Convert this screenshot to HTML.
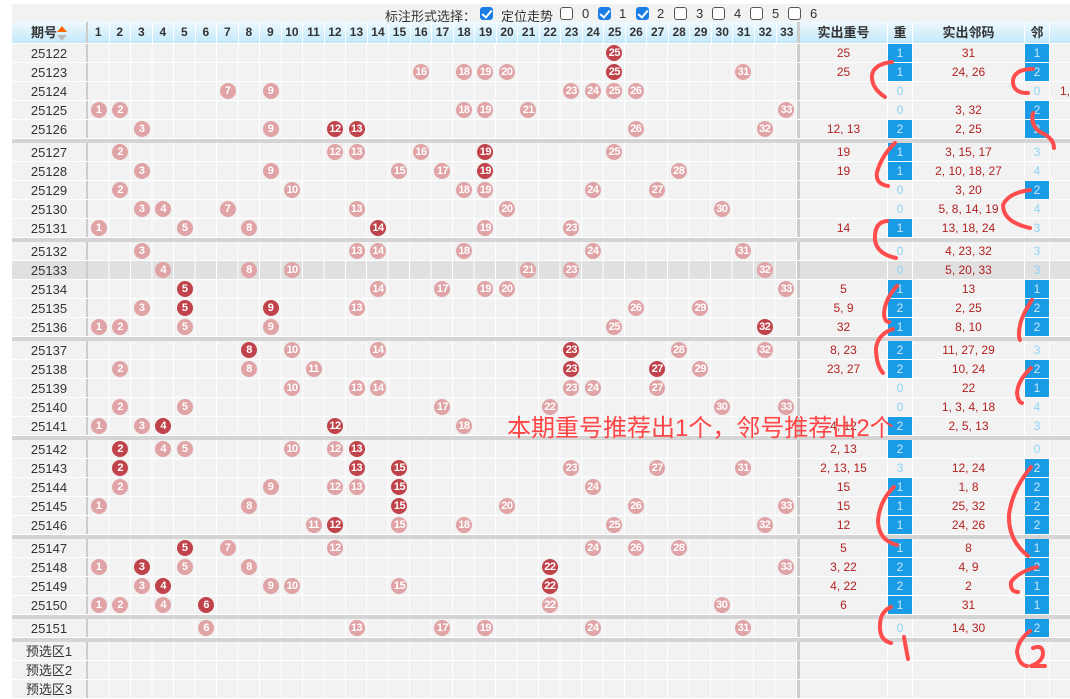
<!DOCTYPE html>
<html><head><meta charset="utf-8">
<style>
*{margin:0;padding:0;box-sizing:border-box}
body{width:1070px;height:697px;overflow:hidden;background:#fff;font-family:"Liberation Sans","Noto Sans CJK SC",sans-serif;font-size:12px;color:#333;position:relative}
.top{position:absolute;left:12px;top:4px;width:1058px;height:18px;background:#f2f2f2;font-size:13px;color:#333}
.top span{position:absolute;top:2px}
.cb{position:absolute;top:3px;width:13px;height:13px;border:1px solid #555;border-radius:3px;background:#fff}
.cb.on{background:#1a7ee6;border-color:#1a7ee6}
.cb.on:after{content:"";position:absolute;left:3px;top:0px;width:4px;height:8px;border:solid #fff;border-width:0 2px 2px 0;transform:rotate(40deg)}
.tbl{position:absolute;left:12px;top:22px;width:1058px}
.r{display:flex;height:19px;background:#f2f2f2;border-bottom:1px solid #fff}
.r>div{height:18px;line-height:19px;text-align:center;border-right:1px solid #fff}
.q{width:76px;border-right:2px solid #ccc!important;font-size:13px}
.n{width:712px;border-right:3px solid #ccc!important;position:relative;background:repeating-linear-gradient(90deg,transparent 0 20.48px,#fff 20.48px 21.48px)}
.s{width:88px;color:#b22222}
.z{width:25px;color:#8fd3f7}
.z.on{background:#1a9be6;color:#cbe8fb}
.l{width:112px;color:#b22222}
.x{width:19px;border-right:none!important;color:#b22222;text-align:left!important;padding-left:10px}
.h{height:22px;background:linear-gradient(#eef9fe,#c3e8fa)}
.h>div{height:21px;line-height:21px;font-weight:bold;font-size:13px;color:#333}
.h .n{background:none;display:flex}
.h .n span{flex:1;border-right:1px solid #fff;font-size:12px}
.g{background:#e0e0e0}
.sep{height:4px;background:#d4d4d4}
.n i{position:absolute;top:1px;left:calc((var(--c) - 1) * 21.485px + 2.7px);width:16px;height:16px;border-radius:50%;background:#e0a3a6;color:#fff;font-style:normal;font-weight:bold;font-size:11px;line-height:16px;text-align:center;letter-spacing:-0.5px}
.n i.d{background:#c0434b}
.note{position:absolute;left:507px;top:408px;font-size:24px;color:#ff4545;white-space:nowrap}
.arr{display:inline-block;vertical-align:middle;width:10px;height:18px;position:relative}
.arr:before{content:"";position:absolute;left:0;top:1px;border:5px solid transparent;border-bottom:6px solid #f60;border-top:0}
.arr:after{content:"";position:absolute;left:0;top:10px;border:5px solid transparent;border-top:6px solid #bbb;border-bottom:0}
svg{position:absolute;left:0;top:0}
</style></head><body>
<div class="top">
<span style="left:373px">标注形式选择：</span>
<div class="cb on" style="left:468px"></div><span style="left:489px">定位走势</span>
<div class="cb" style="left:548px"></div><span style="left:570px">0</span>
<div class="cb on" style="left:586px"></div><span style="left:607px">1</span>
<div class="cb on" style="left:624px"></div><span style="left:645px">2</span>
<div class="cb" style="left:662px"></div><span style="left:684px">3</span>
<div class="cb" style="left:700px"></div><span style="left:722px">4</span>
<div class="cb" style="left:738px"></div><span style="left:760px">5</span>
<div class="cb" style="left:776px"></div><span style="left:798px">6</span>
</div>
<div class="tbl">
<div class="r h"><div class="q">期号<span class="arr"></span></div><div class="n"><span>1</span><span>2</span><span>3</span><span>4</span><span>5</span><span>6</span><span>7</span><span>8</span><span>9</span><span>10</span><span>11</span><span>12</span><span>13</span><span>14</span><span>15</span><span>16</span><span>17</span><span>18</span><span>19</span><span>20</span><span>21</span><span>22</span><span>23</span><span>24</span><span>25</span><span>26</span><span>27</span><span>28</span><span>29</span><span>30</span><span>31</span><span>32</span><span style="border:none">33</span></div><div class="s" style="color:#333">实出重号</div><div class="z" style="color:#333">重</div><div class="l" style="color:#333">实出邻码</div><div class="z" style="color:#333">邻</div><div class="x"></div></div>

<div class="r"><div class="q">25122</div><div class="n"><i class="d" style="--c:25">25</i></div><div class="s">25</div><div class="z on">1</div><div class="l">31</div><div class="z on">1</div><div class="x"></div></div>
<div class="r"><div class="q">25123</div><div class="n"><i style="--c:16">16</i><i style="--c:18">18</i><i style="--c:19">19</i><i style="--c:20">20</i><i class="d" style="--c:25">25</i><i style="--c:31">31</i></div><div class="s">25</div><div class="z on">1</div><div class="l">24, 26</div><div class="z on">2</div><div class="x"></div></div>
<div class="r"><div class="q">25124</div><div class="n"><i style="--c:7">7</i><i style="--c:9">9</i><i style="--c:23">23</i><i style="--c:24">24</i><i style="--c:25">25</i><i style="--c:26">26</i></div><div class="s"></div><div class="z">0</div><div class="l"></div><div class="z">0</div><div class="x">1,</div></div>
<div class="r"><div class="q">25125</div><div class="n"><i style="--c:1">1</i><i style="--c:2">2</i><i style="--c:18">18</i><i style="--c:19">19</i><i style="--c:21">21</i><i style="--c:33">33</i></div><div class="s"></div><div class="z">0</div><div class="l">3, 32</div><div class="z on">2</div><div class="x"></div></div>
<div class="r"><div class="q">25126</div><div class="n"><i style="--c:3">3</i><i style="--c:9">9</i><i class="d" style="--c:12">12</i><i class="d" style="--c:13">13</i><i style="--c:26">26</i><i style="--c:32">32</i></div><div class="s">12, 13</div><div class="z on">2</div><div class="l">2, 25</div><div class="z on">2</div><div class="x"></div></div>
<div class="sep"></div>
<div class="r"><div class="q">25127</div><div class="n"><i style="--c:2">2</i><i style="--c:12">12</i><i style="--c:13">13</i><i style="--c:16">16</i><i class="d" style="--c:19">19</i><i style="--c:25">25</i></div><div class="s">19</div><div class="z on">1</div><div class="l">3, 15, 17</div><div class="z">3</div><div class="x"></div></div>
<div class="r"><div class="q">25128</div><div class="n"><i style="--c:3">3</i><i style="--c:9">9</i><i style="--c:15">15</i><i style="--c:17">17</i><i class="d" style="--c:19">19</i><i style="--c:28">28</i></div><div class="s">19</div><div class="z on">1</div><div class="l">2, 10, 18, 27</div><div class="z">4</div><div class="x"></div></div>
<div class="r"><div class="q">25129</div><div class="n"><i style="--c:2">2</i><i style="--c:10">10</i><i style="--c:18">18</i><i style="--c:19">19</i><i style="--c:24">24</i><i style="--c:27">27</i></div><div class="s"></div><div class="z">0</div><div class="l">3, 20</div><div class="z on">2</div><div class="x"></div></div>
<div class="r"><div class="q">25130</div><div class="n"><i style="--c:3">3</i><i style="--c:4">4</i><i style="--c:7">7</i><i style="--c:13">13</i><i style="--c:20">20</i><i style="--c:30">30</i></div><div class="s"></div><div class="z">0</div><div class="l">5, 8, 14, 19</div><div class="z">4</div><div class="x"></div></div>
<div class="r"><div class="q">25131</div><div class="n"><i style="--c:1">1</i><i style="--c:5">5</i><i style="--c:8">8</i><i class="d" style="--c:14">14</i><i style="--c:19">19</i><i style="--c:23">23</i></div><div class="s">14</div><div class="z on">1</div><div class="l">13, 18, 24</div><div class="z">3</div><div class="x"></div></div>
<div class="sep"></div>
<div class="r"><div class="q">25132</div><div class="n"><i style="--c:3">3</i><i style="--c:13">13</i><i style="--c:14">14</i><i style="--c:18">18</i><i style="--c:24">24</i><i style="--c:31">31</i></div><div class="s"></div><div class="z">0</div><div class="l">4, 23, 32</div><div class="z">3</div><div class="x"></div></div>
<div class="r g"><div class="q">25133</div><div class="n"><i style="--c:4">4</i><i style="--c:8">8</i><i style="--c:10">10</i><i style="--c:21">21</i><i style="--c:23">23</i><i style="--c:32">32</i></div><div class="s"></div><div class="z">0</div><div class="l">5, 20, 33</div><div class="z">3</div><div class="x"></div></div>
<div class="r"><div class="q">25134</div><div class="n"><i class="d" style="--c:5">5</i><i style="--c:14">14</i><i style="--c:17">17</i><i style="--c:19">19</i><i style="--c:20">20</i><i style="--c:33">33</i></div><div class="s">5</div><div class="z on">1</div><div class="l">13</div><div class="z on">1</div><div class="x"></div></div>
<div class="r"><div class="q">25135</div><div class="n"><i style="--c:3">3</i><i class="d" style="--c:5">5</i><i class="d" style="--c:9">9</i><i style="--c:13">13</i><i style="--c:26">26</i><i style="--c:29">29</i></div><div class="s">5, 9</div><div class="z on">2</div><div class="l">2, 25</div><div class="z on">2</div><div class="x"></div></div>
<div class="r"><div class="q">25136</div><div class="n"><i style="--c:1">1</i><i style="--c:2">2</i><i style="--c:5">5</i><i style="--c:9">9</i><i style="--c:25">25</i><i class="d" style="--c:32">32</i></div><div class="s">32</div><div class="z on">1</div><div class="l">8, 10</div><div class="z on">2</div><div class="x"></div></div>
<div class="sep"></div>
<div class="r"><div class="q">25137</div><div class="n"><i class="d" style="--c:8">8</i><i style="--c:10">10</i><i style="--c:14">14</i><i class="d" style="--c:23">23</i><i style="--c:28">28</i><i style="--c:32">32</i></div><div class="s">8, 23</div><div class="z on">2</div><div class="l">11, 27, 29</div><div class="z">3</div><div class="x"></div></div>
<div class="r"><div class="q">25138</div><div class="n"><i style="--c:2">2</i><i style="--c:8">8</i><i style="--c:11">11</i><i class="d" style="--c:23">23</i><i class="d" style="--c:27">27</i><i style="--c:29">29</i></div><div class="s">23, 27</div><div class="z on">2</div><div class="l">10, 24</div><div class="z on">2</div><div class="x"></div></div>
<div class="r"><div class="q">25139</div><div class="n"><i style="--c:10">10</i><i style="--c:13">13</i><i style="--c:14">14</i><i style="--c:23">23</i><i style="--c:24">24</i><i style="--c:27">27</i></div><div class="s"></div><div class="z">0</div><div class="l">22</div><div class="z on">1</div><div class="x"></div></div>
<div class="r"><div class="q">25140</div><div class="n"><i style="--c:2">2</i><i style="--c:5">5</i><i style="--c:17">17</i><i style="--c:22">22</i><i style="--c:30">30</i><i style="--c:33">33</i></div><div class="s"></div><div class="z">0</div><div class="l">1, 3, 4, 18</div><div class="z">4</div><div class="x"></div></div>
<div class="r"><div class="q">25141</div><div class="n"><i style="--c:1">1</i><i style="--c:3">3</i><i class="d" style="--c:4">4</i><i class="d" style="--c:12">12</i><i style="--c:18">18</i></div><div class="s">4, 12</div><div class="z on">2</div><div class="l">2, 5, 13</div><div class="z">3</div><div class="x"></div></div>
<div class="sep"></div>
<div class="r"><div class="q">25142</div><div class="n"><i class="d" style="--c:2">2</i><i style="--c:4">4</i><i style="--c:5">5</i><i style="--c:10">10</i><i style="--c:12">12</i><i class="d" style="--c:13">13</i></div><div class="s">2, 13</div><div class="z on">2</div><div class="l"></div><div class="z">0</div><div class="x"></div></div>
<div class="r"><div class="q">25143</div><div class="n"><i class="d" style="--c:2">2</i><i class="d" style="--c:13">13</i><i class="d" style="--c:15">15</i><i style="--c:23">23</i><i style="--c:27">27</i><i style="--c:31">31</i></div><div class="s">2, 13, 15</div><div class="z">3</div><div class="l">12, 24</div><div class="z on">2</div><div class="x"></div></div>
<div class="r"><div class="q">25144</div><div class="n"><i style="--c:2">2</i><i style="--c:9">9</i><i style="--c:12">12</i><i style="--c:13">13</i><i class="d" style="--c:15">15</i><i style="--c:24">24</i></div><div class="s">15</div><div class="z on">1</div><div class="l">1, 8</div><div class="z on">2</div><div class="x"></div></div>
<div class="r"><div class="q">25145</div><div class="n"><i style="--c:1">1</i><i style="--c:8">8</i><i class="d" style="--c:15">15</i><i style="--c:20">20</i><i style="--c:26">26</i><i style="--c:33">33</i></div><div class="s">15</div><div class="z on">1</div><div class="l">25, 32</div><div class="z on">2</div><div class="x"></div></div>
<div class="r"><div class="q">25146</div><div class="n"><i style="--c:11">11</i><i class="d" style="--c:12">12</i><i style="--c:15">15</i><i style="--c:18">18</i><i style="--c:25">25</i><i style="--c:32">32</i></div><div class="s">12</div><div class="z on">1</div><div class="l">24, 26</div><div class="z on">2</div><div class="x"></div></div>
<div class="sep"></div>
<div class="r"><div class="q">25147</div><div class="n"><i class="d" style="--c:5">5</i><i style="--c:7">7</i><i style="--c:12">12</i><i style="--c:24">24</i><i style="--c:26">26</i><i style="--c:28">28</i></div><div class="s">5</div><div class="z on">1</div><div class="l">8</div><div class="z on">1</div><div class="x"></div></div>
<div class="r"><div class="q">25148</div><div class="n"><i style="--c:1">1</i><i class="d" style="--c:3">3</i><i style="--c:5">5</i><i style="--c:8">8</i><i class="d" style="--c:22">22</i><i style="--c:33">33</i></div><div class="s">3, 22</div><div class="z on">2</div><div class="l">4, 9</div><div class="z on">2</div><div class="x"></div></div>
<div class="r"><div class="q">25149</div><div class="n"><i style="--c:3">3</i><i class="d" style="--c:4">4</i><i style="--c:9">9</i><i style="--c:10">10</i><i style="--c:15">15</i><i class="d" style="--c:22">22</i></div><div class="s">4, 22</div><div class="z on">2</div><div class="l">2</div><div class="z on">1</div><div class="x"></div></div>
<div class="r"><div class="q">25150</div><div class="n"><i style="--c:1">1</i><i style="--c:2">2</i><i style="--c:4">4</i><i class="d" style="--c:6">6</i><i style="--c:22">22</i><i style="--c:30">30</i></div><div class="s">6</div><div class="z on">1</div><div class="l">31</div><div class="z on">1</div><div class="x"></div></div>
<div class="sep"></div>
<div class="r"><div class="q">25151</div><div class="n"><i style="--c:6">6</i><i style="--c:13">13</i><i style="--c:17">17</i><i style="--c:19">19</i><i style="--c:24">24</i><i style="--c:31">31</i></div><div class="s"></div><div class="z">0</div><div class="l">14, 30</div><div class="z on">2</div><div class="x"></div></div>
<div class="sep"></div>
<div class="r"><div class="q">预选区1</div><div class="n"></div><div class="s"></div><div class="z"></div><div class="l"></div><div class="z"></div><div class="x"></div></div>
<div class="r"><div class="q">预选区2</div><div class="n"></div><div class="s"></div><div class="z"></div><div class="l"></div><div class="z"></div><div class="x"></div></div>
<div class="r"><div class="q">预选区3</div><div class="n"></div><div class="s"></div><div class="z"></div><div class="l"></div><div class="z"></div><div class="x"></div></div>
</div>
<div class="note">本期重号推荐出1个，邻号推荐出2个</div>
<svg width="1070" height="697" fill="none" stroke="#ff4d4d" stroke-width="4" stroke-linecap="round" stroke-linejoin="round">
<path d="M892 62 Q874 64 872 75 Q871 88 885 97"/>
<path d="M1033 69 Q1015 69 1013 80 Q1012 93 1028 93"/>
<path d="M1033 113 Q1030 125 1040 132 Q1054 138 1054 148"/>
<path d="M895 143 Q882 155 877 172 Q875 184 888 186"/>
<path d="M1030 190 Q1008 193 1003 205 Q1003 222 1030 228"/>
<path d="M887 221 Q874 222 875 240 Q877 254 896 258"/>
<path d="M897 286 Q884 300 884 315 Q885 322 889 322"/>
<path d="M893 329 Q878 334 876 348 Q876 365 883 373"/>
<path d="M1032 300 Q1022 315 1020 325 Q1018 336 1020 340"/>
<path d="M1031 368 Q1018 380 1017 393 Q1018 402 1022 403"/>
<path d="M1031 467 Q1012 490 1009 515 Q1008 540 1028 556"/>
<path d="M894 487 Q880 500 878 520 Q878 540 897 545"/>
<path d="M1037 567 Q1018 572 1011 582 Q1010 592 1018 592"/>
<path d="M891 607 Q880 612 880 625 Q879 640 891 643"/>
<path d="M904 637 L908 659"/>
<path d="M1030 631 Q1018 640 1017 652 Q1019 665 1027 666 M1033 648 Q1043 644 1043 654 Q1042 662 1031 666 L1045 666"/>
</svg>
</body></html>
